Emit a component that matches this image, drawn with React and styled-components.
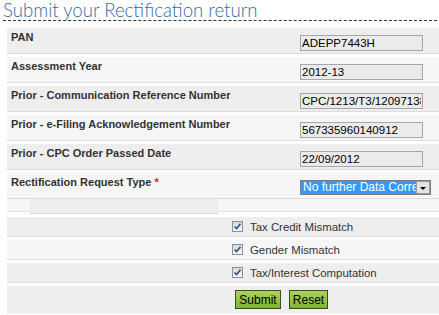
import React from 'react';
import styled, { createGlobalStyle } from 'styled-components';

const GlobalStyle = createGlobalStyle`
  body {
    margin: 0;
    background: #fff;
    font-family: "Liberation Sans", Arial, sans-serif;
    overflow: hidden;
  }
`;

const Page = styled.div`
  width: 439px;
  height: 315px;
  overflow: hidden;
`;

const Title = styled.h2`
  margin: 0 0 0 3px;
  width: 434px;
  height: 20px;
  font-family: Lato, "Liberation Sans", sans-serif;
  font-weight: 300;
  font-size: 18.6px;
  line-height: 21px;
  color: #3568a8;
  border-bottom: 1px dashed #333;
  white-space: nowrap;
`;

const Form = styled.div`
  margin: 7px 0 0 7px;
  width: 440px;
`;

const FieldRow = styled.div`
  display: grid;
  grid-template-columns: 293px 1fr;
  height: 25px;
  background: ${p => (p.$light ? '#f6f6f6' : '#eeeeee')};
  border-bottom: 1px solid #dcdcdc;
  margin-bottom: ${p => (p.$last ? 0 : 3)}px;
`;

const Label = styled.div`
  padding: 3px 0 0 4px;
  font-size: 11px;
  font-weight: 700;
  line-height: 13px;
  color: #333;
  white-space: nowrap;
`;

const Required = styled.span`
  color: #d22;
  margin-left: 3px;
`;

const Cell = styled.div`
  padding-top: ${p => (p.$top ? p.$top : 5)}px;
`;

const TextBox = styled.input`
  box-sizing: border-box;
  width: 123px;
  height: 16px;
  margin: 0;
  padding: 0 1px;
  border: 1px solid #a6a6a6;
  background: #ebebeb;
  font-family: "Liberation Sans", Arial, sans-serif;
  font-size: 11.5px;
  color: #000;
  outline: none;
`;

const SelectBox = styled.div`
  display: flex;
  box-sizing: border-box;
  width: 131px;
  height: 15px;
  border: 1px solid #7d7d7d;
  background: #fff;
`;

const SelectValue = styled.div`
  flex: 1;
  overflow: hidden;
  white-space: nowrap;
  background: #3399ff;
  color: #fff;
  font-size: 12px;
  line-height: 13px;
  padding-left: 2px;
`;

const SelectArrow = styled.div`
  position: relative;
  box-sizing: border-box;
  width: 14px;
  background: #e3e3e3;
  border: 1px solid #9a9a9a;
  &::after {
    content: '';
    position: absolute;
    left: 3px;
    top: 5px;
    border-left: 3px solid transparent;
    border-right: 3px solid transparent;
    border-top: 3px solid #000;
  }
`;

const StripRow = styled.div`
  height: 12px;
  background: #f6f6f6;
  border-bottom: 1px solid #e2e2e2;
  margin-bottom: 5px;
  padding-left: 23px;
`;

const GhostBox = styled.div`
  width: 188px;
  height: 14px;
  background: #eeeeee;
  border-bottom: 1px solid #d8d8d8;
`;

const CheckRow = styled.div`
  display: flex;
  align-items: center;
  gap: 7px;
  height: 19px;
  padding-left: 225px;
  background: ${p => (p.$light ? '#f6f6f6' : '#eeeeee')};
  border-bottom: 1px solid #dcdcdc;
  margin-bottom: 3px;
  font-size: 11.4px;
  color: #333;
`;

const CheckBox = styled.span`
  display: inline-flex;
  align-items: center;
  justify-content: center;
  box-sizing: border-box;
  width: 11px;
  height: 11px;
  border: 1px solid #8e8f8f;
  background: linear-gradient(#d8d8d8, #f8f8f8);
`;

const ButtonRow = styled.div`
  display: flex;
  gap: 8px;
  height: 28px;
  box-sizing: border-box;
  padding: 4px 0 0 228px;
  margin-top: 1px;
  background: #eeeeee;
`;

const Button = styled.button`
  width: ${p => p.$w}px;
  height: 19px;
  padding: 0;
  border: 1px solid #3e4a22;
  background: linear-gradient(#a9d45e, #7db52f);
  font-family: "Liberation Sans", Arial, sans-serif;
  font-size: 12px;
  color: #000;
  cursor: pointer;
`;

const Tick = () => (
  <svg width="9" height="9" viewBox="0 0 9 9">
    <path d="M1.5 4.5 L3.6 6.6 L7.5 1.8" fill="none" stroke="#2f4f8f" strokeWidth="1.6" />
  </svg>
);

const fields = [
  { label: 'PAN', value: 'ADEPP7443H' },
  { label: 'Assessment Year', value: '2012-13' },
  { label: 'Prior - Communication Reference Number', value: 'CPC/1213/T3/1209713875' },
  { label: 'Prior - e-Filing Acknowledgement Number', value: '567335960140912' },
  { label: 'Prior - CPC Order Passed Date', value: '22/09/2012' },
];

const checks = ['Tax Credit Mismatch', 'Gender Mismatch', 'Tax/Interest Computation'];

const App = () => (
  <Page>
    <GlobalStyle />
    <Title>Submit your Rectification return</Title>
    <Form>
      {fields.map((f, i) => (
        <FieldRow key={f.label} $light={i % 2 === 1}>
          <Label>{f.label}</Label>
          <Cell>
            <TextBox readOnly value={f.value} />
          </Cell>
        </FieldRow>
      ))}
      <FieldRow $light $last>
        <Label>
          Rectification Request Type<Required>*</Required>
        </Label>
        <Cell $top={7}>
          <SelectBox>
            <SelectValue>No further Data Correction</SelectValue>
            <SelectArrow />
          </SelectBox>
        </Cell>
      </FieldRow>
      <StripRow>
        <GhostBox />
      </StripRow>
      {checks.map((c, i) => (
        <CheckRow key={c} $light={i % 2 === 1}>
          <CheckBox>
            <Tick />
          </CheckBox>
          {c}
        </CheckRow>
      ))}
      <ButtonRow>
        <Button $w={46}>Submit</Button>
        <Button $w={39}>Reset</Button>
      </ButtonRow>
    </Form>
  </Page>
);

export default App;
